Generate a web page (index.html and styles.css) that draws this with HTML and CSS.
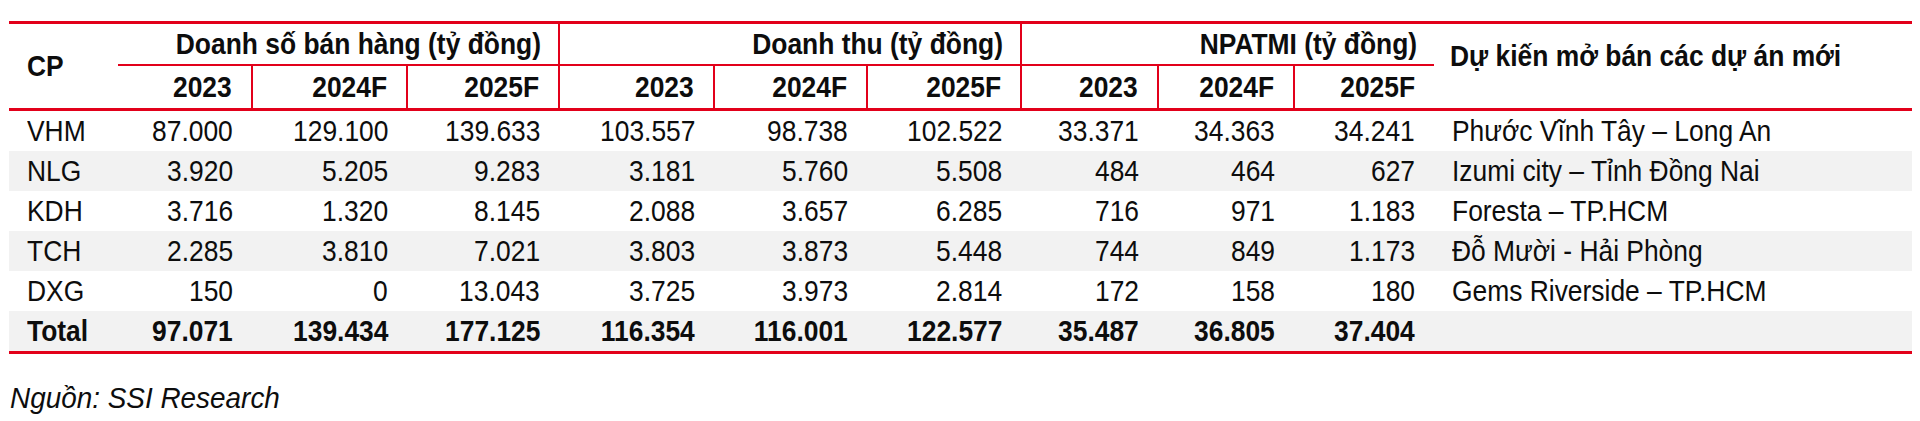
FILE: index.html
```html
<!DOCTYPE html>
<html lang="vi">
<head>
<meta charset="utf-8">
<title>Bảng dự phóng</title>
<link rel="stylesheet" href="styles.css">
</head>
<body>
<table class="fin">
  <colgroup>
    <col class="c-cp">
    <col class="c-ds1"><col class="c-ds2"><col class="c-ds3">
    <col class="c-dt1"><col class="c-dt2"><col class="c-dt3">
    <col class="c-np1"><col class="c-np2"><col class="c-np3">
    <col class="c-proj">
  </colgroup>
  <thead>
    <tr class="h1">
      <th rowspan="2" class="cp"><span class="l">CP</span></th>
      <th colspan="3" class="grp first"><span class="r">Doanh số bán hàng (tỷ đồng)</span></th>
      <th colspan="3" class="grp"><span class="r">Doanh thu (tỷ đồng)</span></th>
      <th colspan="3" class="grp"><span class="r">NPATMI (tỷ đồng)</span></th>
      <th rowspan="2" class="proj"><span class="l">Dự kiến mở bán các dự án mới</span></th>
    </tr>
    <tr class="h2">
      <th class="yr first"><span class="r">2023</span></th><th class="yr"><span class="r">2024F</span></th><th class="yr"><span class="r">2025F</span></th>
      <th class="yr"><span class="r">2023</span></th><th class="yr"><span class="r">2024F</span></th><th class="yr"><span class="r">2025F</span></th>
      <th class="yr"><span class="r">2023</span></th><th class="yr"><span class="r">2024F</span></th><th class="yr"><span class="r">2025F</span></th>
    </tr>
  </thead>
  <tbody>
    <tr>
      <td class="tk"><span class="l">VHM</span></td><td><span class="r">87.000</span></td><td><span class="r">129.100</span></td><td><span class="r">139.633</span></td><td><span class="r">103.557</span></td><td><span class="r">98.738</span></td><td><span class="r">102.522</span></td><td><span class="r">33.371</span></td><td><span class="r">34.363</span></td><td><span class="r">34.241</span></td><td class="pj"><span class="l">Phước Vĩnh Tây – Long An</span></td>
    </tr>
    <tr class="alt">
      <td class="tk"><span class="l">NLG</span></td><td><span class="r">3.920</span></td><td><span class="r">5.205</span></td><td><span class="r">9.283</span></td><td><span class="r">3.181</span></td><td><span class="r">5.760</span></td><td><span class="r">5.508</span></td><td><span class="r">484</span></td><td><span class="r">464</span></td><td><span class="r">627</span></td><td class="pj"><span class="l">Izumi city – Tỉnh Đồng Nai</span></td>
    </tr>
    <tr>
      <td class="tk"><span class="l">KDH</span></td><td><span class="r">3.716</span></td><td><span class="r">1.320</span></td><td><span class="r">8.145</span></td><td><span class="r">2.088</span></td><td><span class="r">3.657</span></td><td><span class="r">6.285</span></td><td><span class="r">716</span></td><td><span class="r">971</span></td><td><span class="r">1.183</span></td><td class="pj"><span class="l">Foresta – TP.HCM</span></td>
    </tr>
    <tr class="alt">
      <td class="tk"><span class="l">TCH</span></td><td><span class="r">2.285</span></td><td><span class="r">3.810</span></td><td><span class="r">7.021</span></td><td><span class="r">3.803</span></td><td><span class="r">3.873</span></td><td><span class="r">5.448</span></td><td><span class="r">744</span></td><td><span class="r">849</span></td><td><span class="r">1.173</span></td><td class="pj"><span class="l">Đỗ Mười - Hải Phòng</span></td>
    </tr>
    <tr>
      <td class="tk"><span class="l">DXG</span></td><td><span class="r">150</span></td><td><span class="r">0</span></td><td><span class="r">13.043</span></td><td><span class="r">3.725</span></td><td><span class="r">3.973</span></td><td><span class="r">2.814</span></td><td><span class="r">172</span></td><td><span class="r">158</span></td><td><span class="r">180</span></td><td class="pj"><span class="l">Gems Riverside – TP.HCM</span></td>
    </tr>
    <tr class="alt total">
      <td class="tk"><span class="l">Total</span></td><td><span class="r">97.071</span></td><td><span class="r">139.434</span></td><td><span class="r">177.125</span></td><td><span class="r">116.354</span></td><td><span class="r">116.001</span></td><td><span class="r">122.577</span></td><td><span class="r">35.487</span></td><td><span class="r">36.805</span></td><td><span class="r">37.404</span></td><td class="pj"></td>
    </tr>
  </tbody>
</table>
<p class="source"><span class="l">Nguồn: SSI Research</span></p>
</body>
</html>
```

FILE: styles.css
```css
html, body {
  margin: 0;
  padding: 0;
  background: #ffffff;
}

body {
  padding: 21px 0 0 9px;
  font-family: "Liberation Sans", Arial, sans-serif;
  color: #0d0d0d;
}

.fin {
  border-collapse: collapse;
  table-layout: fixed;
  width: 1903px;
  font-size: 30px;
  border-top: 3px solid #e2001a;
  border-bottom: 3px solid #e2001a;
}

/* Liberation Sans horizontally condensed to mimic the narrow face of the source */
.l, .r {
  display: inline-block;
  transform: scaleX(0.88);
  white-space: nowrap;
}
.l { transform-origin: 0 50%; }
.r { transform-origin: 100% 50%; }

.c-cp { width: 109px; }
.c-ds1 { width: 134px; }
.c-ds2 { width: 155px; }
.c-ds3 { width: 152px; }
.c-dt1 { width: 155px; }
.c-dt2 { width: 153px; }
.c-dt3 { width: 154px; }
.c-np1 { width: 137px; }
.c-np2 { width: 136px; }
.c-np3 { width: 140px; }
.c-proj { width: 478px; }

.fin th {
  font-weight: bold;
  padding: 0 19px 0 0;
  text-align: right;
  white-space: nowrap;
  line-height: 1;
}

.h1 th { height: 40px; }
.h2 th { height: 42px; }

.h1 .grp {
  border-left: 2px solid #e2001a;
  border-bottom: 2px solid #e2001a;
  padding-right: 17px;
}

.h1 .grp.first { border-left: none; }

.h2 .yr {
  border-left: 2px solid #e2001a;
  border-bottom: 3px solid #e2001a;
}

.h2 .yr.first { border-left: none; }

.fin th.cp {
  text-align: left;
  padding-left: 18px;
  border-bottom: 3px solid #e2001a;
}

.fin th.proj {
  text-align: left;
  padding: 0 0 20px 16px;
  border-bottom: 3px solid #e2001a;
}

.fin td {
  height: 40px;
  padding: 0 19px 0 0;
  text-align: right;
  white-space: nowrap;
  line-height: 1;
}

.fin td.tk {
  text-align: left;
  padding-left: 18px;
}

.fin td.pj {
  text-align: left;
  padding-left: 18px;
}

.alt td { background: #f2f2f2; }

.total td { font-weight: bold; }

.source {
  margin: 27px 0 0 1px;
  font-size: 30px;
  font-style: italic;
  color: #0d0d0d;
}

.source .l { transform: scaleX(0.93); }
```
